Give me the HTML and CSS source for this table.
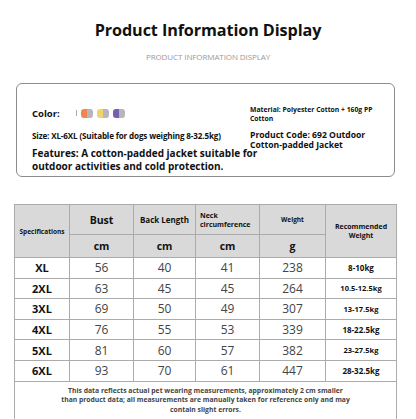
FILE: index.html
```html
<!DOCTYPE html>
<html lang="en">
<head>
    <meta charset="UTF-8">
    <meta name="viewport" content="width=device-width, initial-scale=1.0">
    <title>Product Information Display</title>
    <link rel="stylesheet" href="styles.css">
</head>
<body>
    <div class="page">
        <div class="heading">
            <h1>Product Information Display</h1>
            <p class="sub">PRODUCT INFORMATION DISPLAY</p>
        </div>

        <!-- product info box -->
        <div class="info-box">
            <div class="info-top">
                <div class="info-left">
                    <div class="color-row">
                        <span class="color-label">Color:</span>
                        <span class="tick"></span>
                        <span class="swatch"><i class="orange"></i><i class="grey"></i></span>
                        <span class="swatch"><i class="yellow"></i><i class="grey"></i></span>
                        <span class="swatch"><i class="purple"></i><i class="grey"></i></span>
                    </div>
                    <p class="size">Size: XL-6XL (Suitable for dogs weighing 8-32.5kg)</p>
                </div>
                <div class="info-right">
                    <p class="material">Material: Polyester Cotton + 160g PP Cotton</p>
                    <p class="code">Product Code: 692 Outdoor Cotton-padded Jacket</p>
                </div>
            </div>
            <p class="features">Features: A cotton-padded jacket suitable for outdoor activities and cold protection.</p>
        </div>

        <!-- size chart -->
        <table class="size-table">
            <colgroup>
                <col style="width: 55px">
                <col style="width: 64px">
                <col style="width: 62px">
                <col style="width: 64px">
                <col style="width: 66px">
                <col style="width: 71px">
            </colgroup>
            <tr class="head-1">
                <th rowspan="2" class="tiny">Specifications</th>
                <th class="big">Bust</th>
                <th class="mid">Back Length</th>
                <th class="small left">Neck<br>circumference</th>
                <th class="tiny">Weight</th>
                <th rowspan="2" class="small">Recommended<br>Weight</th>
            </tr>
            <tr class="head-2">
                <th class="big">cm</th>
                <th class="big">cm</th>
                <th class="big">cm</th>
                <th class="big">g</th>
            </tr>
            <tr><td class="sz">XL</td><td>56</td><td>40</td><td>41</td><td>238</td><td class="rec">8-10kg</td></tr>
            <tr><td class="sz">2XL</td><td>63</td><td>45</td><td>45</td><td>264</td><td class="rec sm">10.5-12.5kg</td></tr>
            <tr><td class="sz">3XL</td><td>69</td><td>50</td><td>49</td><td>307</td><td class="rec sm">13-17.5kg</td></tr>
            <tr><td class="sz">4XL</td><td>76</td><td>55</td><td>53</td><td>339</td><td class="rec">18-22.5kg</td></tr>
            <tr><td class="sz">5XL</td><td>81</td><td>60</td><td>57</td><td>382</td><td class="rec sm">23-27.5kg</td></tr>
            <tr><td class="sz">6XL</td><td>93</td><td>70</td><td>61</td><td>447</td><td class="rec">28-32.5kg</td></tr>
            <tr class="note-row">
                <td colspan="6">This data reflects actual pet wearing measurements, approximately 2 cm smaller<br>than product data; all measurements are manually taken for reference only and may<br>contain slight errors.</td>
            </tr>
        </table>
    </div>
</body>
</html>
```

FILE: styles.css
```css
body {
    margin: 0;
    background: #fff;
    font-family: "Open Sans", "Noto Sans", sans-serif;
    color: #111;
}

.page {
    width: 416px;
    height: 419px;
    overflow: hidden;
}

.heading {
    text-align: center;
    padding-top: 18px;
}

h1 {
    margin: 0;
    font-size: 16.2px;
    line-height: 24px;
    font-weight: 700;
    letter-spacing: -0.1px;
}

.sub {
    margin: 10px 0 0;
    font-size: 8px;
    line-height: 10px;
    color: #9a9a9a;
    letter-spacing: -0.1px;
}

.info-box {
    margin: 21px 0 0 16px;
    width: 379px;
    height: 94px;
    box-sizing: border-box;
    border: 1px solid #8c8c8c;
    border-radius: 6px;
    padding: 22px 14px 0 15px;
}

.info-top {
    display: flex;
    justify-content: space-between;
    align-items: flex-start;
}

.info-left {
    width: 210px;
}

.color-row {
    display: flex;
    align-items: center;
    height: 14px;
}

.color-label {
    font-size: 9.5px;
    font-weight: 700;
    width: 44px;
}

.tick {
    width: 1px;
    height: 6px;
    background: #aaa;
    margin-right: 4px;
}

.swatch {
    display: flex;
    width: 12px;
    height: 9px;
    border-radius: 3px;
    overflow: hidden;
    margin-right: 4px;
}

.swatch i {
    flex: 1;
}

.orange { background: #f2874a; }
.yellow { background: #f2d36b; }
.purple { background: #7a5db0; }
.grey { background: #b8b5bd; }

.size {
    margin: 9.5px 0 0;
    font-size: 8.1px;
    line-height: 11px;
    font-weight: 700;
    white-space: nowrap;
    letter-spacing: -0.15px;
}

.info-right {
    width: 130px;
    margin: -1px 0 -10px;
}

.material {
    margin: 0;
    font-size: 6.8px;
    line-height: 9px;
    font-weight: 700;
}

.code {
    margin: 6.5px 0 0;
    font-size: 8.6px;
    line-height: 10px;
    font-weight: 700;
}

.features {
    margin: 6px 0 0;
    width: 250px;
    font-size: 10px;
    line-height: 13px;
    font-weight: 700;
}

.size-table {
    margin: 27px 0 0 14px;
    width: 382px;
    border-collapse: collapse;
    table-layout: fixed;
}

.size-table th,
.size-table td {
    border: 1px solid #ababab;
    text-align: center;
    padding: 0;
}

.size-table th {
    background: #d9d9d9;
    font-weight: 700;
}

.head-1 th {
    height: 29px;
}

.head-2 th {
    height: 22px;
}

.big {
    font-size: 10.5px;
}

.mid {
    font-size: 8px;
}

.small {
    font-size: 7px;
    line-height: 9px;
}

.left {
    text-align: left !important;
    padding-left: 4px !important;
}

.tiny {
    font-size: 6.5px;
}

.size-table td {
    height: 19.6px;
    font-size: 12px;
    color: #444;
}

.size-table td.sz {
    font-size: 11px;
    font-weight: 700;
    color: #111;
}

.size-table td.rec {
    font-size: 8px;
    font-weight: 700;
    color: #111;
}

.size-table td.rec.sm {
    font-size: 7.5px;
}

.note-row td {
    height: 37px;
    font-size: 6.8px;
    line-height: 9.5px;
    font-weight: 700;
    color: #444;
}
```
